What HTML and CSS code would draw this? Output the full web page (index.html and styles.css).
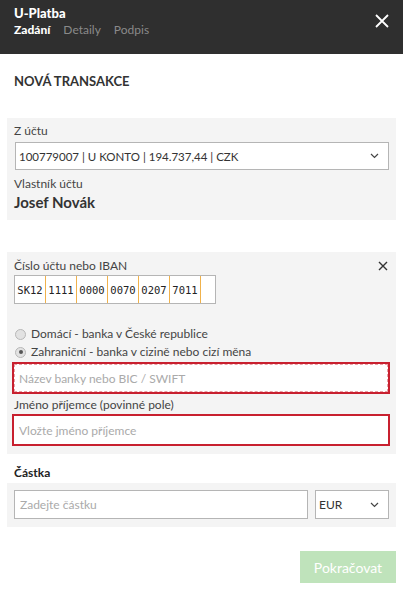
FILE: index.html
```html
<!DOCTYPE html>
<html lang="cs">
<head>
  <meta charset="UTF-8" />
  <title>U-Platba</title>
  <link rel="stylesheet" href="styles.css">
</head>
<body>
  <header class="topbar">
    <div class="brand">
      <div class="app-name">U-Platba</div>
      <nav class="tabs">
        <span class="tab active">Zadání</span>
        <span class="tab">Detaily</span>
        <span class="tab">Podpis</span>
      </nav>
    </div>
    <svg class="close" width="14" height="14" viewBox="0 0 14 14"><path d="M1 1L13 13M13 1L1 13" stroke="#fff" stroke-width="1.8" fill="none"/></svg>
  </header>

  <main class="content">
    <h1 class="title">NOVÁ TRANSAKCE</h1>

    <section class="panel panel-from">
      <div class="label">Z účtu</div>
      <div class="select account">
        <span>100779007 | U KONTO | 194.737,44 | CZK</span>
        <svg class="chev" width="9" height="6" viewBox="0 0 9 6"><path d="M1 1L4.5 4.5L8 1" stroke="#444" stroke-width="1.2" fill="none"/></svg>
      </div>
      <div class="label owner-label">Vlastník účtu</div>
      <div class="owner">Josef Novák</div>
    </section>

    <section class="panel panel-to">
      <div class="label-row">
        <span class="label">Číslo účtu nebo IBAN</span>
        <svg width="10" height="10" viewBox="0 0 10 10"><path d="M1 1L9 9M9 1L1 9" stroke="#333" stroke-width="1.4" fill="none"/></svg>
      </div>
      <div class="iban">
        <span class="cell">SK12</span>
        <span class="cell">1111</span>
        <span class="cell">0000</span>
        <span class="cell">0070</span>
        <span class="cell">0207</span>
        <span class="cell">7011</span>
        <span class="cell empty"></span>
      </div>
      <div class="radios">
        <label class="radio"><span class="dot"></span>Domácí - banka v České republice</label>
        <label class="radio"><span class="dot checked"></span>Zahraniční - banka v cizině nebo cizí měna</label>
      </div>
      <div class="input error focused">Název banky nebo BIC / SWIFT</div>
      <div class="label name-label">Jméno příjemce (povinné pole)</div>
      <div class="input error">Vložte jméno příjemce</div>
    </section>

    <div class="label amount-label">Částka</div>
    <section class="panel panel-amount">
      <div class="input amount">Zadejte částku</div>
      <div class="select currency">
        <span>EUR</span>
        <svg class="chev" width="9" height="6" viewBox="0 0 9 6"><path d="M1 1L4.5 4.5L8 1" stroke="#444" stroke-width="1.2" fill="none"/></svg>
      </div>
    </section>

    <div class="actions">
      <button class="btn-next" disabled>Pokračovat</button>
    </div>
  </main>
</body>
</html>
```

FILE: styles.css
```css
body { margin: 0; font-family: Lato, "Open Sans", sans-serif; font-size: 12px; color: #333; background: #fff; }

.topbar { height: 54px; box-sizing: border-box; background: #2f2f2f; padding: 5px 14px 0 14px; display: flex; justify-content: space-between; align-items: flex-start; }
.app-name { color: #fff; font-weight: 900; font-size: 13px; line-height: 16px; }
.tabs { display: flex; gap: 13px; line-height: 18px; font-size: 12px; }
.tab { color: #8a8a8a; }
.tab.active { color: #fff; font-weight: 900; }
.close { margin-top: 9px; }

.content { padding: 0 7px; }
.title { margin: 17px 0 27px 7px; font-size: 13px; line-height: 20px; font-weight: 700; color: #333; }

.panel { background: #f4f4f4; padding: 0 6px 8px 7px; }
.label { color: #444; line-height: 16px; font-size: 12px; }

.panel-from { padding-top: 5px; }
.select { display: flex; justify-content: space-between; align-items: center; box-sizing: border-box; background: #fff; border: 1px solid #b5b5b5; padding: 0 9px 0 3px; color: #333; }
.account { height: 28px; margin: 3px 1px 0 1px; font-size: 11.5px; }
.owner-label { margin-top: 6px; }
.owner { font-size: 15px; font-weight: bold; line-height: 20px; color: #333; }

.panel-to { margin-top: 32px; padding-top: 6px; }
.label-row { display: flex; justify-content: space-between; align-items: center; padding-right: 2px; }
.iban { display: flex; width: 202px; height: 29px; box-sizing: border-box; margin-top: 1px; background: #fff; border: 1px solid #b5b5b5; font-family: "DejaVu Sans Mono", monospace; font-size: 10.5px; }
.cell { width: 31px; box-sizing: border-box; display: flex; align-items: center; justify-content: center; border-right: 1px solid #f0b24c; color: #222; }
.cell.empty { flex: 1; border-right: none; }

.radios { margin-top: 21px; }
.radio { display: flex; align-items: center; line-height: 18px; color: #444; }
.dot { width: 9px; height: 9px; border-radius: 50%; border: 1px solid #b8b8b8; background: #e2e2e2; margin: 0 5px 0 1px; position: relative; }
.dot.checked::after { content: ""; position: absolute; left: 2.5px; top: 2.5px; width: 4px; height: 4px; border-radius: 50%; background: #555; }

.input { box-sizing: border-box; background: #fff; border: 1px solid #b5b5b5; color: #aaa; display: flex; align-items: center; padding: 0 5px; }
.input.error { height: 32px; margin: 1px 0 0 -2px; border: 2px solid #c8202f; }
.input.focused { outline: 1px dashed #e9a0a6; outline-offset: -3px; }
.name-label { margin-top: 3px; }

.amount-label { margin: 11px 0 2px 7px; font-weight: bold; color: #222; }
.panel-amount { display: flex; gap: 7px; padding-top: 7px; }
.amount { flex: 1; height: 29px; }
.currency { width: 74px; height: 29px; margin-right: 1px; }

.actions { display: flex; justify-content: flex-end; margin-top: 24px; }
.btn-next { width: 96px; height: 32px; border: none; background: #bfe3bb; color: #fff; font-family: Lato, "Open Sans", sans-serif; font-size: 14px; }
```
